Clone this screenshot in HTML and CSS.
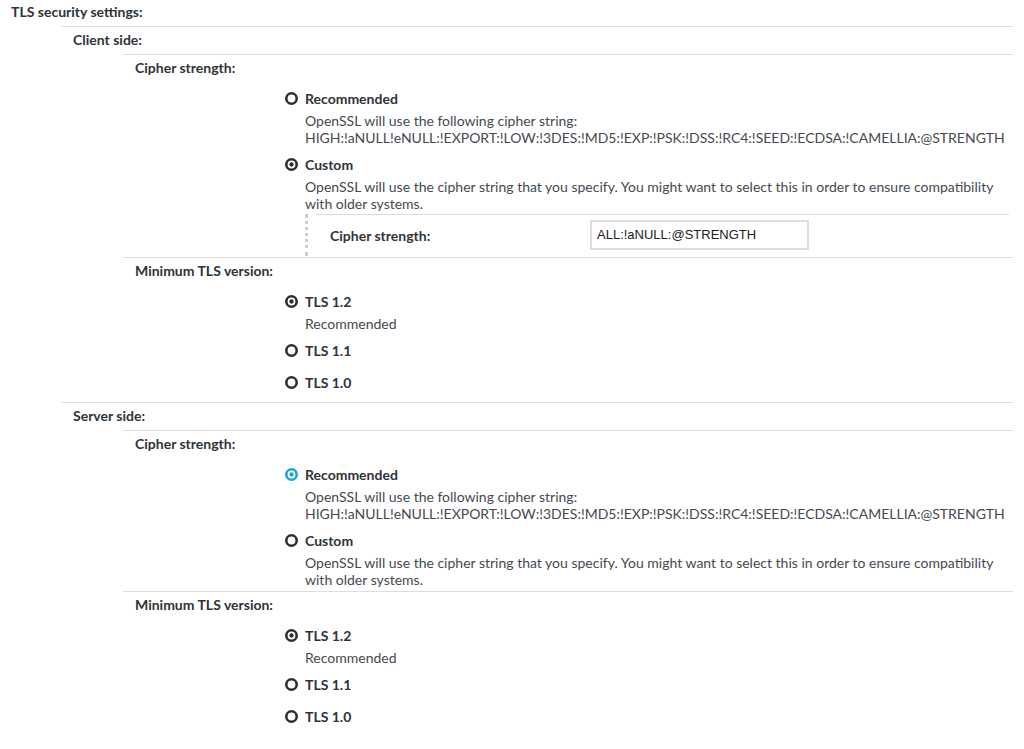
FILE: index.html
```html
<!DOCTYPE html>
<html lang="en">
<head>
  <meta charset="UTF-8">
  <title>TLS security settings</title>
  <link rel="stylesheet" href="styles.css">
</head>
<body>
  <div class="form">
    <div class="title">TLS security settings:</div>

    <!-- Client side -->
    <div class="row level1">
      <div class="row-label">Client side:</div>

      <div class="row level2">
        <div class="row-label">Cipher strength:</div>
        <div class="choices">
          <div class="choice">
            <div class="choice-title">
              <svg class="radio" viewBox="0 0 12 12"><circle cx="6" cy="6" r="4.8" fill="none" stroke="#2b2f33" stroke-width="2.4"/></svg>
              Recommended
            </div>
            <div class="choice-desc">OpenSSL will use the following cipher string:<br>HIGH:!aNULL!eNULL:!EXPORT:!LOW:!3DES:!MD5:!EXP:!PSK:!DSS:!RC4:!SEED:!ECDSA:!CAMELLIA:@STRENGTH</div>
          </div>
          <div class="choice with-sub">
            <div class="choice-title">
              <svg class="radio" viewBox="0 0 12 12"><circle cx="6" cy="6" r="4.8" fill="none" stroke="#2b2f33" stroke-width="2.4"/><circle cx="6" cy="6" r="2" fill="#2b2f33"/></svg>
              Custom
            </div>
            <div class="choice-desc">OpenSSL will use the cipher string that you specify. You might want to select this in order to ensure compatibility with older systems.</div>
            <div class="subform">
              <div class="subrow">
                <div class="subrow-label">Cipher strength:</div>
                <div class="text-input">ALL:!aNULL:@STRENGTH</div>
              </div>
            </div>
          </div>
        </div>
      </div>

      <div class="row level2">
        <div class="row-label">Minimum TLS version:</div>
        <div class="choices">
          <div class="choice">
            <div class="choice-title">
              <svg class="radio" viewBox="0 0 12 12"><circle cx="6" cy="6" r="4.8" fill="none" stroke="#2b2f33" stroke-width="2.4"/><circle cx="6" cy="6" r="2" fill="#2b2f33"/></svg>
              TLS 1.2
            </div>
            <div class="choice-desc">Recommended</div>
          </div>
          <div class="choice">
            <div class="choice-title">
              <svg class="radio" viewBox="0 0 12 12"><circle cx="6" cy="6" r="4.8" fill="none" stroke="#2b2f33" stroke-width="2.4"/></svg>
              TLS 1.1
            </div>
          </div>
          <div class="choice">
            <div class="choice-title">
              <svg class="radio" viewBox="0 0 12 12"><circle cx="6" cy="6" r="4.8" fill="none" stroke="#2b2f33" stroke-width="2.4"/></svg>
              TLS 1.0
            </div>
          </div>
        </div>
      </div>
    </div>

    <!-- Server side -->
    <div class="row level1">
      <div class="row-label">Server side:</div>

      <div class="row level2">
        <div class="row-label">Cipher strength:</div>
        <div class="choices">
          <div class="choice">
            <div class="choice-title">
              <svg class="radio" viewBox="0 0 12 12"><circle cx="6" cy="6" r="4.8" fill="none" stroke="#1ea3dc" stroke-width="2.4"/><circle cx="6" cy="6" r="2" fill="#1ea3dc"/></svg>
              Recommended
            </div>
            <div class="choice-desc">OpenSSL will use the following cipher string:<br>HIGH:!aNULL!eNULL:!EXPORT:!LOW:!3DES:!MD5:!EXP:!PSK:!DSS:!RC4:!SEED:!ECDSA:!CAMELLIA:@STRENGTH</div>
          </div>
          <div class="choice tight">
            <div class="choice-title">
              <svg class="radio" viewBox="0 0 12 12"><circle cx="6" cy="6" r="4.8" fill="none" stroke="#2b2f33" stroke-width="2.4"/></svg>
              Custom
            </div>
            <div class="choice-desc">OpenSSL will use the cipher string that you specify. You might want to select this in order to ensure compatibility with older systems.</div>
          </div>
        </div>
      </div>

      <div class="row level2">
        <div class="row-label">Minimum TLS version:</div>
        <div class="choices">
          <div class="choice">
            <div class="choice-title">
              <svg class="radio" viewBox="0 0 12 12"><circle cx="6" cy="6" r="4.8" fill="none" stroke="#2b2f33" stroke-width="2.4"/><circle cx="6" cy="6" r="2" fill="#2b2f33"/></svg>
              TLS 1.2
            </div>
            <div class="choice-desc">Recommended</div>
          </div>
          <div class="choice">
            <div class="choice-title">
              <svg class="radio" viewBox="0 0 12 12"><circle cx="6" cy="6" r="4.8" fill="none" stroke="#2b2f33" stroke-width="2.4"/></svg>
              TLS 1.1
            </div>
          </div>
          <div class="choice">
            <div class="choice-title">
              <svg class="radio" viewBox="0 0 12 12"><circle cx="6" cy="6" r="4.8" fill="none" stroke="#2b2f33" stroke-width="2.4"/></svg>
              TLS 1.0
            </div>
          </div>
        </div>
      </div>
    </div>
  </div>
</body>
</html>
```

FILE: styles.css
```css
/* Grundeinstellungen */
body {
  margin: 0;
  background: #fff;
  font-family: Lato, "Open Sans", sans-serif;
  font-size: 14px;
  color: #2f3338;
}
.form {
  padding: 0 11px 0 11px;
}
/* Haupttitel */
.title {
  font-weight: bold;
  line-height: 16px;
  padding: 4px 0 6px 0;
}
/* Verschachtelte Zeilen mit Trennlinie */
.row {
  border-top: 1px solid #dddddd;
}
.row.level1 {
  margin-left: 50px;
}
.row.level2 {
  margin-left: 62px;
}
.row-label {
  font-weight: bold;
  line-height: 14px;
  padding: 6px 0 7px 12px;
}
/* Radio-Auswahl */
.choices {
  padding: 3px 0 1px 162px;
}
.choice {
  padding-bottom: 5px;
}
.choice.tight {
  padding-bottom: 2px;
}
.choice.with-sub {
  padding-bottom: 0;
}
.choice-title {
  display: flex;
  align-items: center;
  gap: 7px;
  height: 27px;
  font-weight: bold;
}
.radio {
  width: 13px;
  height: 13px;
  flex: none;
}
.choice-desc {
  padding-left: 20px;
  line-height: 17px;
  color: #454a50;
}
/* Unterformular bei "Custom" */
.subform {
  margin: 2px 0 0 20px;
  border-left: 3px dotted #cccccc;
  padding-left: 8px;
}
.subrow {
  display: flex;
  align-items: center;
  border-top: 1px solid #dddddd;
  margin-right: 4px;
  padding: 5px 0 6px 14px;
}
.subrow-label {
  width: 260px;
  font-weight: bold;
}
.text-input {
  box-sizing: border-box;
  width: 219px;
  height: 30px;
  border: 2px solid #dddddd;
  padding: 0 5px;
  line-height: 26px;
  font-family: "Liberation Sans", Arial, sans-serif;
  font-size: 13px;
  color: #222;
}
```
